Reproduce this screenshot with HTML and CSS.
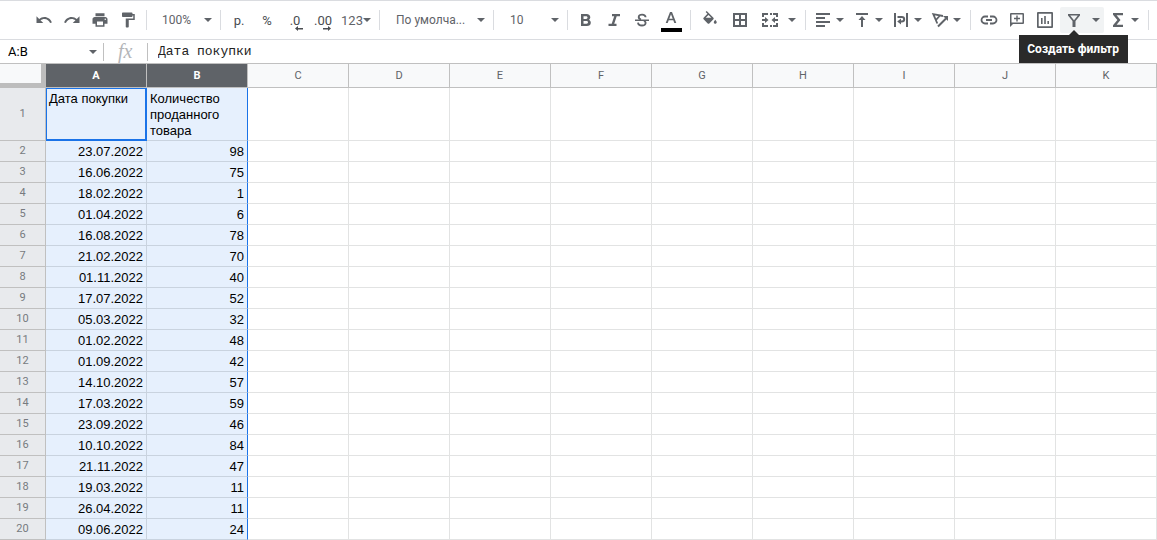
FILE: index.html
```html
<!DOCTYPE html>
<html lang="ru">
<head>
<meta charset="utf-8">
<title>Таблица</title>
<link rel="stylesheet" href="styles.css">
</head>
<body>
<div class="toolbar" role="toolbar" aria-label="Панель инструментов">
  <button class="tool" aria-label="Отменить"><svg class="icon" viewBox="0 0 24 24"><path d="M12.5 8c-2.65 0-5.05.99-6.9 2.6L2 7v9h9l-3.62-3.62c1.39-1.16 3.16-1.88 5.12-1.88 3.54 0 6.55 2.31 7.6 5.5l2.37-.78C21.08 11.03 17.15 8 12.5 8z"/></svg></button>
  <button class="tool" aria-label="Повторить"><svg class="icon" viewBox="0 0 24 24"><path d="M18.4 10.6C16.55 8.99 14.15 8 11.5 8c-4.65 0-8.58 3.03-9.96 7.22L3.9 16c1.05-3.19 4.05-5.5 7.6-5.5 1.95 0 3.73.72 5.12 1.88L13 16h9V7l-3.6 3.6z"/></svg></button>
  <button class="tool" aria-label="Печать"><svg class="icon" viewBox="0 0 24 24"><path d="M19 8H5c-1.66 0-3 1.34-3 3v6h4v4h12v-4h4v-6c0-1.66-1.34-3-3-3zm-3 11H8v-5h8v5zm3-7c-.55 0-1-.45-1-1s.45-1 1-1 1 .45 1 1-.45 1-1 1zm-1-9H6v4h12V3z"/></svg></button>
  <button class="tool" aria-label="Копировать форматирование"><svg class="icon" viewBox="0 0 24 24"><path d="M18 4V3c0-.55-.45-1-1-1H5c-.55 0-1 .45-1 1v4c0 .55.45 1 1 1h12c.55 0 1-.45 1-1V6h1v4H9v11c0 .55.45 1 1 1h2c.55 0 1-.45 1-1v-9h8V4h-3z"/></svg></button>
  <span class="sep"></span>
  <label class="picker zoom"><select aria-label="Масштаб"><option>100%</option></select><svg class="caret" viewBox="0 0 8 4"><path d="M0 0h8L4 4z"/></svg></label>
  <span class="sep"></span>
  <button class="tool text">р.</button>
  <button class="tool text">%</button>
  <button class="tool text decimal">.0<svg class="arrow" viewBox="0 0 8 5"><path d="M0 2.500L3 0v2h5v1.400H3V5z"/></svg></button>
  <button class="tool text decimal">.00<svg class="arrow" viewBox="0 0 8 5"><path d="M8 2.500L5 0v2H0v1.400h5V5z"/></svg></button>
  <button class="tool text formats">123<svg class="caret" viewBox="0 0 8 4"><path d="M0 0h8L4 4z"/></svg></button>
  <span class="sep"></span>
  <label class="picker family"><select aria-label="Шрифт"><option>По умолча...</option></select><svg class="caret" viewBox="0 0 8 4"><path d="M0 0h8L4 4z"/></svg></label>
  <span class="sep"></span>
  <label class="picker size"><select aria-label="Размер шрифта"><option>10</option></select><svg class="caret" viewBox="0 0 8 4"><path d="M0 0h8L4 4z"/></svg></label>
  <span class="sep"></span>
  <button class="tool" aria-label="Полужирный"><svg class="icon" viewBox="0 0 18 18"><path fill-rule="evenodd" d="M4 3h5.600c2.200 0 3.700 1.300 3.700 3.200 0 1.200-.6 2.100-1.500 2.600 1.300.5 2 1.600 2 2.900 0 2.200-1.600 3.300-3.900 3.300H4zM6.500 5.200v2.700h2.600c1.900 0 1.900-2.700 0-2.700zM6.500 10.100v2.700h3c2 0 2-2.700 0-2.700z"/></svg></button>
  <button class="tool" aria-label="Курсив"><svg class="icon" viewBox="0 0 18 18"><path d="M7 3v2.300h2.200L6.700 12.700H3.500V15h8v-2.300H9.200l2.500-7.400H15V3z"/></svg></button>
  <button class="tool" aria-label="Зачёркнутый"><svg class="icon" viewBox="0 0 18 18"><path d="M2 8.500h14V10H2z"/><path d="M12.600 6.300C12.500 4.400 11 3.600 9.100 3.600c-4.100 0-4.500 3.900-1.100 4.900M5 11.600c.2 2.100 1.900 2.900 4 2.900 4 0 4.600-3.300 2-4.700" fill="none" stroke="currentColor" stroke-width="1.800"/></svg></button>
  <button class="tool wide" aria-label="Цвет текста"><svg class="glyph" viewBox="0 0 22 24"><path fill-rule="evenodd" d="M10 4h2l4.300 11h-2l-1-2.700H8.700l-1 2.700h-2zM11 6.300l-1.700 4.500h3.400z"/><path d="M1 20h21v4H1z" fill="#000"/></svg></button>
  <span class="sep"></span>
  <button class="tool wide" aria-label="Цвет заливки"><svg class="icon" viewBox="0 0 24 24"><path d="M16.560 8.940L7.620 0 6.210 1.410l2.380 2.380-5.150 5.150c-.59.59-.59 1.540 0 2.120l5.500 5.500c.29.29.68.44 1.060.44s.77-.15 1.060-.44l5.500-5.500c.59-.58.59-1.530 0-2.120zM6.210 9L10 5.210 13.790 9H6.210zM19 11.500s-2 2.170-2 3.500c0 1.100.9 2 2 2s2-.9 2-2c0-1.330-2-3.500-2-3.500z"/></svg></button>
  <button class="tool wide" aria-label="Границы"><svg class="icon" viewBox="0 0 18 18"><path fill-rule="evenodd" d="M2 2h14v14H2zM4 4v4h4V4zM10 4v4h4V4zM4 10v4h4v-4zM10 10v4h4v-4z"/></svg></button>
  <button class="tool merge" aria-label="Объединить ячейки"><svg class="icon" viewBox="0 0 18 18"><path d="M1 2h6v2H3v2H1zM9 2h2v2H9zM12 2h5v4h-2V4h-3zM1 12h2v2h4v2H1zM9 14h2v2H9zM15 12h2v4h-5v-2h3zM1 8h3V6l3.500 3L4 12v-2H1zM17 8h-3V6l-3.500 3 3.500 3v-2h3z"/></svg><svg class="caret" viewBox="0 0 8 4"><path d="M0 0h8L4 4z"/></svg></button>
  <span class="sep"></span>
  <button class="tool split" aria-label="Выравнивание по горизонтали"><svg class="icon" viewBox="0 0 18 18"><path d="M2 2h14v2H2zM2 6h9v2H2zM2 10h14v2H2zM2 14h9v2H2z"/></svg><svg class="caret" viewBox="0 0 8 4"><path d="M0 0h8L4 4z"/></svg></button>
  <button class="tool split" aria-label="Выравнивание по вертикали"><svg class="icon" viewBox="0 0 18 18"><path d="M3 2h12v2H3zM9 5l3.500 4H10v7H8V9H5.500z"/></svg><svg class="caret" viewBox="0 0 8 4"><path d="M0 0h8L4 4z"/></svg></button>
  <button class="tool split" aria-label="Перенос текста"><svg class="icon" viewBox="0 0 18 18"><path d="M2 2h2v14H2zM14 2h2v14h-2zM9 7.500v6L5.200 10.500z"/><path d="M5.500 6H9.700c3.300 0 3.300 4.600 0 4.600H8" fill="none" stroke="currentColor" stroke-width="2"/></svg><svg class="caret" viewBox="0 0 8 4"><path d="M0 0h8L4 4z"/></svg></button>
  <button class="tool split" aria-label="Поворот текста"><svg class="icon" viewBox="0 0 18 18"><path d="M7 15.500L15 7.500" fill="none" stroke="currentColor" stroke-width="2"/><path d="M17 5v5L12 5z"/><path d="M12 5L2.300 3.200 6.300 12.500M9 4.500L4.500 9.500" fill="none" stroke="currentColor" stroke-width="1.800"/></svg><svg class="caret" viewBox="0 0 8 4"><path d="M0 0h8L4 4z"/></svg></button>
  <span class="sep"></span>
  <button class="tool" aria-label="Вставить ссылку"><svg class="icon" viewBox="0 0 18 18"><path d="M8 5.500H5a3.500 3.500 0 0 0 0 7h3M10 5.500h3a3.500 3.500 0 0 1 0 7h-3M6 9h6" fill="none" stroke="currentColor" stroke-width="1.800"/></svg></button>
  <button class="tool" aria-label="Вставить комментарий"><svg class="icon" viewBox="0 0 18 18"><path fill-rule="evenodd" d="M3 2h12q1 0 1 1v9q0 1-1 1H5l-3 3V3q0-1 1-1zM3.500 3.500v8h11v-8z"/><path d="M8.300 4.500h1.400v2.300H12v1.400H9.700v2.300H8.300V8.200H6V6.800h2.300z"/></svg></button>
  <button class="tool" aria-label="Вставить диаграмму"><svg class="icon" viewBox="0 0 18 18"><path fill-rule="evenodd" d="M2 1h14q1 0 1 1v14q0 1-1 1H2q-1 0-1-1V2q0-1 1-1zM2.700 2.700v12.600h12.600V2.700z"/><path d="M5 7h1.600v6H5zM8.200 5h1.600v8H8.200zM11.400 10H13v3h-1.600z"/></svg></button>
  <div class="filter">
    <button class="tool" aria-label="Создать фильтр" aria-describedby="filter-tip"><svg class="icon" viewBox="0 0 18 18"><path fill-rule="evenodd" d="M3 3h12v1.500L10.500 10v6h-3v-6L3 4.500zM5.200 4.600L9 9.200l3.800-4.600z"/></svg></button>
    <button class="tool more" aria-label="Фильтры"><svg class="caret" viewBox="0 0 8 4"><path d="M0 0h8L4 4z"/></svg></button>
    <div class="tooltip" id="filter-tip" role="tooltip">Создать фильтр</div>
  </div>
  <button class="tool sum" aria-label="Функции"><svg class="icon" viewBox="0 0 18 18"><path d="M4 2h10v2.300H7.600L11.500 9l-3.900 4.700H14V16H4v-1.800L8.400 9 4 3.800z"/></svg><svg class="caret" viewBox="0 0 8 4"><path d="M0 0h8L4 4z"/></svg></button>
  <span class="sep"></span>
</div>

<div class="formula-bar">
  <input class="name-box" aria-label="Диапазон" value="A:B">
  <button class="name-menu" aria-label="Именованные диапазоны"><svg class="caret" viewBox="0 0 8 4"><path d="M0 0h8L4 4z"/></svg></button>
  <span class="fx">fx</span>
  <input class="formula" aria-label="Формула" value="Дата покупки">
</div>

<table class="sheet">
  <colgroup><col class="index"><col span="11"></colgroup>
  <thead>
    <tr><td class="corner"></td><th class="picked">A</th><th class="picked">B</th><th>C</th><th>D</th><th>E</th><th>F</th><th>G</th><th>H</th><th>I</th><th>J</th><th>K</th></tr>
  </thead>
  <tbody>
    <tr class="titles"><th>1</th><td>Дата покупки</td><td>Количество проданного товара</td><td></td><td></td><td></td><td></td><td></td><td></td><td></td><td></td><td></td></tr>
    <tr><th>2</th><td>23.07.2022</td><td>98</td><td></td><td></td><td></td><td></td><td></td><td></td><td></td><td></td><td></td></tr>
    <tr><th>3</th><td>16.06.2022</td><td>75</td><td></td><td></td><td></td><td></td><td></td><td></td><td></td><td></td><td></td></tr>
    <tr><th>4</th><td>18.02.2022</td><td>1</td><td></td><td></td><td></td><td></td><td></td><td></td><td></td><td></td><td></td></tr>
    <tr><th>5</th><td>01.04.2022</td><td>6</td><td></td><td></td><td></td><td></td><td></td><td></td><td></td><td></td><td></td></tr>
    <tr><th>6</th><td>16.08.2022</td><td>78</td><td></td><td></td><td></td><td></td><td></td><td></td><td></td><td></td><td></td></tr>
    <tr><th>7</th><td>21.02.2022</td><td>70</td><td></td><td></td><td></td><td></td><td></td><td></td><td></td><td></td><td></td></tr>
    <tr><th>8</th><td>01.11.2022</td><td>40</td><td></td><td></td><td></td><td></td><td></td><td></td><td></td><td></td><td></td></tr>
    <tr><th>9</th><td>17.07.2022</td><td>52</td><td></td><td></td><td></td><td></td><td></td><td></td><td></td><td></td><td></td></tr>
    <tr><th>10</th><td>05.03.2022</td><td>32</td><td></td><td></td><td></td><td></td><td></td><td></td><td></td><td></td><td></td></tr>
    <tr><th>11</th><td>01.02.2022</td><td>48</td><td></td><td></td><td></td><td></td><td></td><td></td><td></td><td></td><td></td></tr>
    <tr><th>12</th><td>01.09.2022</td><td>42</td><td></td><td></td><td></td><td></td><td></td><td></td><td></td><td></td><td></td></tr>
    <tr><th>13</th><td>14.10.2022</td><td>57</td><td></td><td></td><td></td><td></td><td></td><td></td><td></td><td></td><td></td></tr>
    <tr><th>14</th><td>17.03.2022</td><td>59</td><td></td><td></td><td></td><td></td><td></td><td></td><td></td><td></td><td></td></tr>
    <tr><th>15</th><td>23.09.2022</td><td>46</td><td></td><td></td><td></td><td></td><td></td><td></td><td></td><td></td><td></td></tr>
    <tr><th>16</th><td>10.10.2022</td><td>84</td><td></td><td></td><td></td><td></td><td></td><td></td><td></td><td></td><td></td></tr>
    <tr><th>17</th><td>21.11.2022</td><td>47</td><td></td><td></td><td></td><td></td><td></td><td></td><td></td><td></td><td></td></tr>
    <tr><th>18</th><td>19.03.2022</td><td>11</td><td></td><td></td><td></td><td></td><td></td><td></td><td></td><td></td><td></td></tr>
    <tr><th>19</th><td>26.04.2022</td><td>11</td><td></td><td></td><td></td><td></td><td></td><td></td><td></td><td></td><td></td></tr>
    <tr><th>20</th><td>09.06.2022</td><td>24</td><td></td><td></td><td></td><td></td><td></td><td></td><td></td><td></td><td></td></tr>
  </tbody>
</table>
</body>
</html>
```

FILE: styles.css
```css
* { box-sizing: border-box; }

body {
  margin: 0;
  background: #fff;
  color: #000;
  font-family: Roboto, "Liberation Sans", sans-serif;
}

button, select, input {
  margin: 0;
  padding: 0;
  border: 0;
  background: none;
  color: inherit;
  font: inherit;
}

svg { display: block; flex: none; fill: currentColor; }
.icon { width: 18px; height: 18px; }
.caret { width: 8px; height: 4px; }

/* Toolbar */
.toolbar {
  display: flex;
  align-items: center;
  height: 40px;
  padding-left: 30px;
  border-top: 1px solid #dadce0;
  border-bottom: 1px solid #dadce0;
  color: #5f6368;
  font-size: 12px;
}

.tool {
  display: flex;
  flex: none;
  align-items: center;
  justify-content: center;
  width: 28px;
  height: 26px;
}
.tool.wide { width: 30px; }
.tool.text { font-size: 13px; color: #4a4d51; }
.tool.text.formats { width: 38px; color: #5f6368; }
.tool.split, .tool.merge, .tool.sum {
  justify-content: space-between;
  width: 39px;
  padding: 0 5px 0 4px;
}
.tool.merge { width: 46px; padding-left: 6px; }
.tool.sum { width: 40px; padding-left: 5px; }
.glyph { width: 22px; height: 24px; }

.decimal { position: relative; }
.arrow {
  position: absolute;
  right: 6px;
  bottom: 2px;
  width: 8px;
  height: 5px;
}

.sep {
  flex: none;
  width: 1px;
  height: 20px;
  margin: 0 4px;
  background: #dadce0;
}

.picker {
  display: grid;
  flex: none;
  align-items: center;
  height: 26px;
}
.picker > * { grid-area: 1 / 1; }
.picker select { width: 100%; height: 26px; appearance: none; outline: 0; }
.picker .caret { justify-self: end; margin-right: 4px; pointer-events: none; }
.zoom, .size { width: 65px; }
.zoom select { padding-left: 11px; }
.size select { padding-left: 12px; }
.family { width: 105px; }
.family select { padding-left: 12px; }

.filter {
  position: relative;
  display: flex;
  flex: none;
  margin-left: 1px;
  border-radius: 2px;
  background: #f1f3f4;
}
.more { width: 16px; }

.tooltip {
  position: absolute;
  top: 28px;
  right: -24px;
  z-index: 2;
  padding: 6px 9px 6px 8px;
  background: #2a2a2a;
  color: #fff;
  font-size: 12px;
  font-weight: 700;
  line-height: 16px;
  white-space: nowrap;
}
.tooltip::before {
  content: "";
  position: absolute;
  bottom: 100%;
  left: 50px;
  border: 5px solid transparent;
  border-top: 0;
  border-bottom-color: #2a2a2a;
}

/* Formula bar */
.formula-bar {
  display: flex;
  align-items: center;
  height: 24px;
  border-bottom: 1px solid #c0c0c0;
}
.name-box { width: 84px; padding-left: 8px; font-size: 13px; }
.name-menu {
  display: flex;
  align-items: center;
  width: 20px;
  height: 18px;
  padding-left: 5px;
  border-right: 1px solid #c0c0c0;
  color: #5f6368;
}
.fx {
  width: 44px;
  height: 18px;
  padding-left: 14px;
  border-right: 1px solid #c0c0c0;
  color: #b4b6b9;
  font: italic 20px/16px "Liberation Serif", serif;
}
.formula {
  flex: 1;
  min-width: 0;
  padding-left: 10px;
  color: #222;
  font: 13px/20px "Liberation Mono", monospace;
}

/* Sheet */
.sheet {
  width: 100%;
  table-layout: fixed;
  border-collapse: separate;
  border-spacing: 0;
}
.index { width: 46px; }

.sheet th {
  padding: 0;
  border-right: 1px solid #c0c0c0;
  border-bottom: 1px solid #c0c0c0;
  background: #f8f9fa;
  color: #5f6368;
  font-size: 11px;
  font-weight: 400;
  line-height: 20px;
}
.sheet thead th { height: 24px; }
.sheet thead .picked {
  background: #5f6368;
  color: #fff;
  font-weight: 700;
}
.sheet .corner {
  padding: 0;
  border-right: 5px solid #bdbdbd;
  border-bottom: 5px solid #bdbdbd;
  background: #f8f9fa;
}
.sheet tbody th { background: #e8eaed; color: #777b80; }

.sheet tbody td {
  padding: 3px 3px 1px;
  border-right: 1px solid #e2e3e3;
  border-bottom: 1px solid #e2e3e3;
  font-family: "Liberation Sans", Arial, sans-serif;
  font-size: 13px;
  line-height: 16px;
  text-align: right;
  vertical-align: top;
}
.sheet tbody td:nth-child(2), .sheet tbody td:nth-child(3) {
  border-color: #c9d3df;
  background: #e6f0fd;
}
.sheet tbody td:nth-child(3) { border-right-color: #1a73e8; }
.sheet .titles td { text-align: left; }

/* Active cell outline */
.titles td:nth-child(2) { position: relative; }
.titles td:nth-child(2)::after {
  content: "";
  position: absolute;
  inset: 0 -1px -1px 0;
  border: 1px solid #1a73e8;
  border-right-width: 2px;
  border-bottom-width: 2px;
}
```
